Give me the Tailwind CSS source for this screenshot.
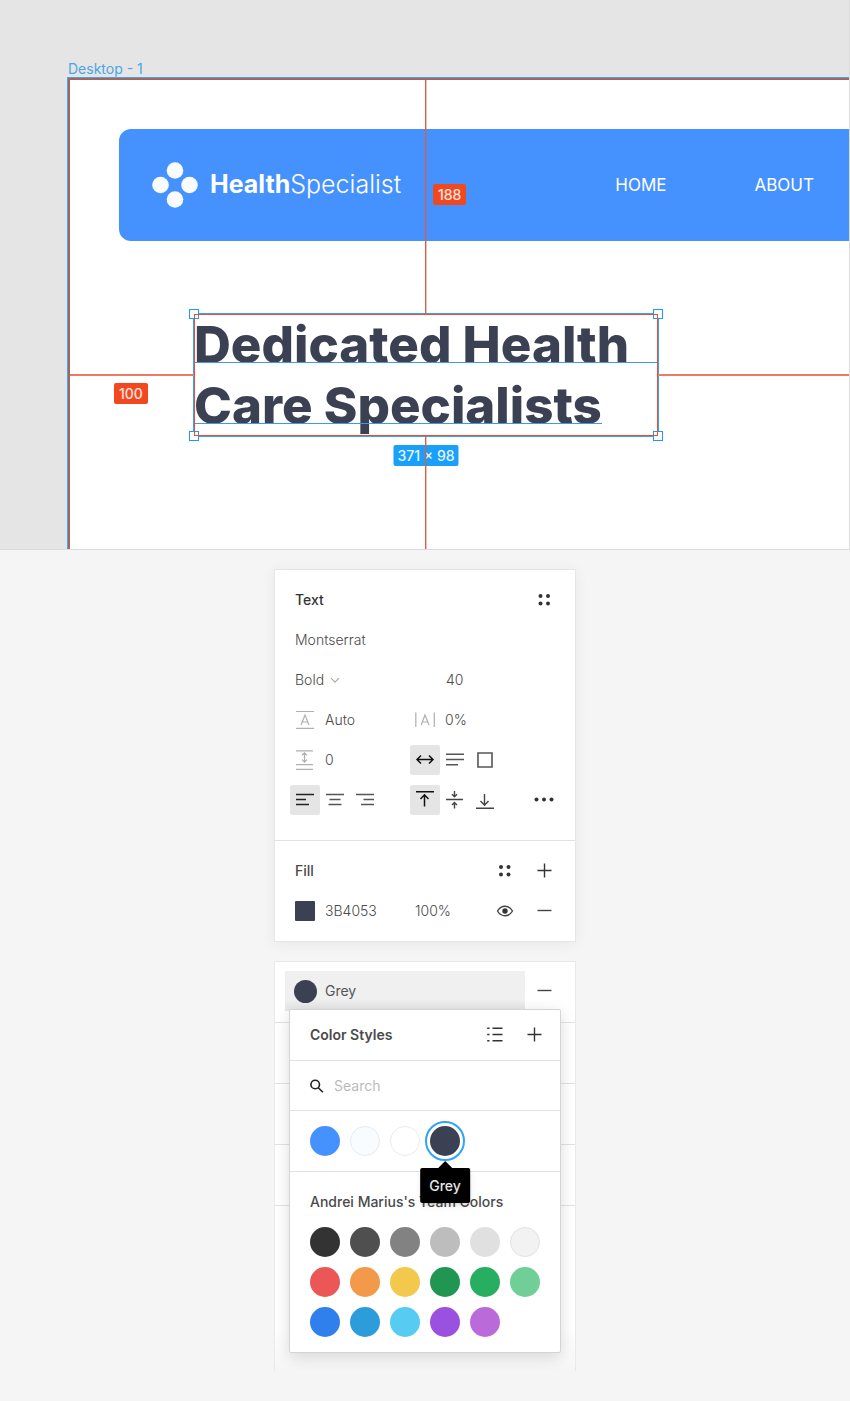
<!DOCTYPE html>
<html lang="en">
<head>
<meta charset="utf-8">
<meta name="viewport" content="width=device-width, initial-scale=1">
<title>Dedicated Health Care Specialists</title>
<script src="https://cdn.jsdelivr.net/npm/@tailwindcss/browser@4"></script>
</head>
<body class="bg-[#f5f5f5] font-['Inter','Liberation_Sans',sans-serif] text-sm text-[#4a4a4a]">

<!-- Canvas -->
<section class="flex flex-col overflow-hidden border-r border-b border-[#dcdcdc] bg-[#e5e5e5] pt-15 pl-[67px]">
  <div class="h-[17px] pl-px text-sm leading-[17px] text-[#4ba6e3]">Desktop - 1</div>
  <div class="border-t border-l border-[#3fa9f0]">
    <div class="relative overflow-hidden border-t-2 border-l-2 border-[#a5645f] bg-white pt-[49px] pb-28">
      <header class="ml-[49px] flex h-28 items-center rounded-l-xl bg-[#4592ff] pr-[35px] pl-[33px] text-white">
        <a href="#" class="flex items-center gap-3 text-[25px]">
          <svg class="size-[46px] shrink-0" viewBox="0 0 46 46" fill="#f8fcff" aria-hidden="true">
            <circle cx="23" cy="8.5" r="8.3"/><circle cx="8.5" cy="23" r="8.3"/><circle cx="37.5" cy="23" r="8.3"/><circle cx="23" cy="37.5" r="8.3"/>
          </svg>
          <span><b class="font-bold">Health</b><span class="font-light">Specialist</span></span>
        </a>
        <nav class="ml-auto flex gap-[88px] text-[17px]">
          <a href="#">HOME</a>
          <a href="#">ABOUT</a>
        </nav>
      </header>

      <div class="relative mt-[72px] ml-[123px] w-[466px] border border-[#3fa0ee]">
        <span class="absolute -top-[5px] -left-[5px] size-[10px] border border-[#1b9bf5] bg-white"></span>
        <span class="absolute -top-[5px] -right-[5px] size-[10px] border border-[#1b9bf5] bg-white"></span>
        <span class="absolute -bottom-[5px] -left-[5px] size-[10px] border border-[#1b9bf5] bg-white"></span>
        <span class="absolute -right-[5px] -bottom-[5px] size-[10px] border border-[#1b9bf5] bg-white"></span>
        <h1 class="relative text-[51px] leading-[61px] font-extrabold whitespace-nowrap text-[#3b4053]">
          <span class="relative block h-[61px]">Dedicated Health<span class="absolute inset-x-0 bottom-[12px] h-px bg-[#3c9be6]"></span></span>
          <span class="relative block h-[61px] w-fit">Care Specialists<span class="absolute inset-x-0 bottom-[12px] h-px bg-[#3c9be6]"></span></span>
        </h1>
        <span class="absolute inset-0 border border-[#e0533a]"></span>
        <!-- Distance guides -->
        <span class="absolute right-full bottom-1/2 -mb-px h-[2px] w-[124px] bg-[#ee7a66]"></span>
        <span class="absolute bottom-1/2 left-full -mb-px h-[2px] w-screen bg-[#ee7a66]"></span>
        <span class="absolute top-[69px] -left-20 rounded-xs bg-[#f2481f] px-[5px] text-sm leading-[21px] font-medium text-white/85">100</span>
        <span class="absolute -top-[130px] left-[239px] rounded-xs bg-[#f2481f] px-[5px] text-sm leading-[21px] font-medium text-white/85">188</span>
        <span class="absolute top-[131px] left-1/2 -translate-x-1/2 rounded-xs bg-[#18a0fb] px-1 text-sm leading-[21px] font-medium whitespace-nowrap text-white/90">371 × 98</span>
        <span class="absolute bottom-full left-1/2 -ml-px h-[235px] w-[2px] border-r border-[#d2604c]/40 bg-[#d2604c] bg-clip-padding"></span>
        <span class="absolute top-full left-1/2 -ml-px h-[113px] w-[2px] border-r border-[#d2604c]/40 bg-[#d2604c] bg-clip-padding"></span>
      </div>
    </div>
  </div>
</section>

<main class="flex flex-col items-center gap-[19px] pt-[19px]">

  <!-- Text and fill properties -->
  <div class="w-[302px] border border-[#e6e6e6] bg-white shadow-[0_2px_14px_rgba(0,0,0,0.06)]">
    <section class="border-b border-[#e2e2e2] px-5 pt-[10px] pb-5">
      <div class="flex h-10 items-center justify-between">
        <h2 class="font-medium text-[#333]">Text</h2>
        <button type="button" aria-label="Text styles" class="flex w-[22px] justify-center">
          <svg class="size-5" viewBox="0 0 20 20" fill="#333"><circle cx="6.5" cy="6" r="2"/><circle cx="14" cy="6" r="2"/><circle cx="6.5" cy="13.5" r="2"/><circle cx="14" cy="13.5" r="2"/></svg>
        </button>
      </div>
      <div class="flex h-10 items-center">
        <input aria-label="Font family" value="Montserrat" class="w-full font-light">
      </div>
      <div class="grid h-10 grid-cols-[151px_1fr] items-center">
        <div class="relative flex items-center">
          <select aria-label="Font weight" class="w-[50px] appearance-none font-light"><option>Bold</option></select>
          <svg class="pointer-events-none absolute left-[35px] size-[10px]" viewBox="0 0 10 10" fill="none" stroke="#aaa" stroke-width="1.2" aria-hidden="true"><path d="M1 3.2 5 7.2 9 3.2"/></svg>
        </div>
        <input aria-label="Font size" value="40" class="w-full font-light">
      </div>
      <div class="grid h-10 grid-cols-[120px_1fr] items-center">
        <label class="flex items-center gap-[10px]">
          <svg class="size-5 shrink-0" viewBox="0 0 20 20" fill="none" stroke="#b0b0b0" stroke-width="1.2" role="img" aria-label="Line height"><path d="M1 1.5h18M1 18.3h18M6 15 10 5l4 10M7.3 12h5.4"/></svg>
          <input value="Auto" class="w-20 font-light">
        </label>
        <label class="flex items-center gap-[10px]">
          <svg class="size-5 shrink-0" viewBox="0 0 20 20" fill="none" stroke="#b0b0b0" stroke-width="1.2" role="img" aria-label="Letter spacing"><path d="M.8 2.5v14.5M19.3 2.5v14.5M6.2 15 10 5l4 10M7.4 12h5.3"/></svg>
          <input value="0%" class="w-20 font-light">
        </label>
      </div>
      <div class="grid h-10 grid-cols-[115px_1fr] items-center">
        <label class="flex items-center gap-[10px]">
          <svg class="size-5 shrink-0" viewBox="0 0 20 20" fill="none" stroke="#b0b0b0" stroke-width="1.2" role="img" aria-label="Paragraph spacing"><path d="M1 .8h17M1 14.6h17M1 19.3h17M9.5 3v9M7 5.3 9.5 2.8 12 5.3M7 9.7l2.5 2.5L12 9.7"/></svg>
          <input value="0" class="w-16 font-light">
        </label>
        <div class="flex">
          <button type="button" aria-label="Auto width" aria-pressed="true" class="flex size-[30px] items-center justify-center rounded-xs bg-[#e5e5e5]">
            <svg class="size-5" viewBox="0 0 20 20" fill="none" stroke="#111" stroke-width="1.5"><path d="M2.3 9.5h15.4M6 5.5 2 9.5l4 4M14 5.5l4 4-4 4"/></svg>
          </button>
          <button type="button" aria-label="Auto height" class="flex size-[30px] items-center justify-center">
            <svg class="size-5" viewBox="0 0 20 20" fill="none" stroke="#555" stroke-width="1.5"><path d="M1 4.3h18M1 9.5h18M1 14.7h12"/></svg>
          </button>
          <button type="button" aria-label="Fixed size" class="flex size-[30px] items-center justify-center">
            <svg class="size-5" viewBox="0 0 20 20" fill="none" stroke="#555"><path stroke-width="1.6" d="M3 3h14v14H3z"/></svg>
          </button>
        </div>
      </div>
      <div class="-ml-[5px] grid h-10 grid-cols-[120px_1fr_auto] items-center">
        <div class="flex">
          <button type="button" aria-label="Align left" aria-pressed="true" class="flex size-[30px] items-center justify-center rounded-xs bg-[#e5e5e5]">
            <svg class="size-5" viewBox="0 0 20 20" fill="none" stroke="#222" stroke-width="1.5"><path d="M1 4.5h18M1 9.5h10M1 14.5h13"/></svg>
          </button>
          <button type="button" aria-label="Align center" class="flex size-[30px] items-center justify-center">
            <svg class="size-5" viewBox="0 0 20 20" fill="none" stroke="#555" stroke-width="1.4"><path d="M1 4.5h18M4.5 9.5h11M3.5 14.5h13"/></svg>
          </button>
          <button type="button" aria-label="Align right" class="flex size-[30px] items-center justify-center">
            <svg class="size-5" viewBox="0 0 20 20" fill="none" stroke="#555" stroke-width="1.4"><path d="M1 4.5h18M8.5 9.5H19M6 14.5h13"/></svg>
          </button>
        </div>
        <div class="flex">
          <button type="button" aria-label="Align top" aria-pressed="true" class="flex size-[30px] items-center justify-center rounded-xs bg-[#e5e5e5]">
            <svg class="size-5" viewBox="0 0 20 20" fill="none" stroke="#111" stroke-width="1.5"><path d="M1 1.7h18M9.5 16.5V4.8M5.5 9l4-4.2 4 4.2"/></svg>
          </button>
          <button type="button" aria-label="Align middle" class="flex size-[30px] items-center justify-center">
            <svg class="size-5" viewBox="0 0 20 20" fill="none" stroke="#444" stroke-width="1.4"><path d="M1 9.5h17M9.5 1v5.5M7 4.2l2.5 2.5L12 4.2M9.5 18.5v-6M7 15l2.5-2.5L12 15"/></svg>
          </button>
          <button type="button" aria-label="Align bottom" class="flex size-[30px] items-center justify-center">
            <svg class="size-5" viewBox="0 0 20 20" fill="none" stroke="#444" stroke-width="1.4"><path d="M1 18.3h18M9.5 4v11M5.5 11l4 4.2 4-4.2"/></svg>
          </button>
        </div>
        <button type="button" aria-label="More options" class="flex w-[22px] justify-center">
          <svg class="h-5 w-[22px]" viewBox="0 0 22 20" fill="#333"><circle cx="3.5" cy="9.5" r="2"/><circle cx="11" cy="9.5" r="2"/><circle cx="18.5" cy="9.5" r="2"/></svg>
        </button>
      </div>
    </section>

    <section class="px-5 py-[10px]">
      <div class="flex h-10 items-center">
        <h2 class="font-medium">Fill</h2>
        <button type="button" aria-label="Fill styles" class="mr-5 ml-auto">
          <svg class="size-5" viewBox="0 0 20 20" fill="#333"><circle cx="6" cy="6" r="2"/><circle cx="13.5" cy="6" r="2"/><circle cx="6" cy="13.5" r="2"/><circle cx="13.5" cy="13.5" r="2"/></svg>
        </button>
        <button type="button" aria-label="Add fill">
          <svg class="size-5" viewBox="0 0 20 20" fill="none" stroke="#333" stroke-width="1.4"><path d="M2.5 9.5h14M9.5 2.5v14"/></svg>
        </button>
      </div>
      <div class="flex h-10 items-center">
        <button type="button" aria-label="Fill color" class="mr-[10px] size-5 rounded-[1px] bg-[#3b4053]"></button>
        <input aria-label="Hex color" value="3B4053" class="w-[90px] font-light">
        <input aria-label="Opacity" value="100%" class="w-15 font-light">
        <button type="button" aria-label="Toggle visibility" class="mr-5 ml-auto">
          <svg class="size-5" viewBox="0 0 20 20"><path d="M2.5 10C4.5 6.6 7 5.2 10 5.2s5.5 1.4 7.5 4.8c-2 3.4-4.500 4.800-7.500 4.800S4.500 13.400 2.500 10z" fill="none" stroke="#444" stroke-width="1.4"/><circle cx="10" cy="10" r="2.7" fill="#333"/></svg>
        </button>
        <button type="button" aria-label="Remove fill">
          <svg class="size-5" viewBox="0 0 20 20" fill="none" stroke="#444" stroke-width="1.4"><path d="M2.5 9.5h14"/></svg>
        </button>
      </div>
    </section>
  </div>

  <!-- Color style picker -->
  <div class="relative w-[302px] border border-b-0 border-[#e9e9e9] bg-linear-to-b from-white from-90% to-[#f5f5f5]">
    <div class="flex h-[61px] items-start border-b border-[#e2e2e2] pt-[9px] pr-5 pl-[10px]">
      <button type="button" class="flex h-10 w-60 items-center gap-2 bg-linear-to-b from-[#f0f0f0] from-70% to-[#e6e6e6] pl-[9px] text-left text-[#555]">
        <span class="size-[23px] rounded-full bg-[#3b4053]"></span>Grey
      </button>
      <button type="button" aria-label="Remove style" class="ml-auto flex h-10 items-center">
        <svg class="size-5" viewBox="0 0 20 20" fill="none" stroke="#444" stroke-width="1.4"><path d="M2.5 9.5h14"/></svg>
      </button>
    </div>
    <div class="h-[61px] border-b border-[#e2e2e2]"></div>
    <div class="h-[61px] border-b border-[#e2e2e2]"></div>
    <div class="h-[61px] border-b border-[#e2e2e2]"></div>
    <div class="h-[165px]"></div>

    <div role="dialog" aria-label="Color Styles" class="absolute inset-x-[14px] top-[47px] rounded-xs border border-[#d4d4d4] bg-white shadow-[0_4px_16px_rgba(0,0,0,0.14)]">
      <div class="flex h-[51px] items-center border-b border-[#e2e2e2] pr-[15px] pl-5">
        <h2 class="font-semibold">Color Styles</h2>
        <button type="button" aria-label="Show as list" class="mr-5 ml-auto">
          <svg class="size-5" viewBox="0 0 20 20" fill="none" stroke="#333" stroke-width="1.5"><path d="M7.5 3.2h10M7.5 9.5h10M7.5 15.8h10M2.2 3.2h2.3M2.2 9.5h2.3M2.2 15.8h2.3"/></svg>
        </button>
        <button type="button" aria-label="Create style">
          <svg class="size-5" viewBox="0 0 20 20" fill="none" stroke="#333" stroke-width="1.4"><path d="M2.5 9.5h14M9.5 2.5v14"/></svg>
        </button>
      </div>
      <label class="flex h-[50px] items-center gap-[10px] border-b border-[#e2e2e2] px-5">
        <svg class="size-[14px] shrink-0" viewBox="0 0 14 14" fill="none" stroke="#222" stroke-width="1.6" role="img" aria-label="Search"><circle cx="5.2" cy="5.5" r="4.3"/><path d="m8.3 8.700 4.500 4.500"/></svg>
        <input type="search" placeholder="Search" class="w-full placeholder:text-[#bbb]">
      </label>
      <div class="flex h-[61px] items-center gap-[10px] border-b border-[#e2e2e2] px-5">
        <button type="button" aria-label="Blue" class="size-[30px] rounded-full bg-[#4592ff]"></button>
        <button type="button" aria-label="Light blue" class="size-[30px] rounded-full border border-[#e3ebf0] bg-[#f8fcff]"></button>
        <button type="button" aria-label="White" class="size-[30px] rounded-full border border-[#ebebeb] bg-white"></button>
        <div class="relative flex">
          <button type="button" aria-describedby="swatch-tip" aria-label="Grey" class="size-[30px] rounded-full bg-[#3b4053] outline-2 outline-offset-[3px] outline-[#2ea5f7]"></button>
          <div id="swatch-tip" role="tooltip" class="absolute top-[42px] left-1/2 -translate-x-1/2 rounded-xs bg-black px-[9px] leading-[35px] font-medium text-[#e6e6e6] shadow-md">
            <svg class="absolute bottom-full left-1/2 h-[7px] w-[14px] -translate-x-1/2" viewBox="0 0 14 7" aria-hidden="true"><path d="M0 7 7 0l7 7z"/></svg>
            Grey
          </div>
        </div>
      </div>
      <h3 class="px-5 pt-5 leading-5 font-medium">Andrei Marius's Team Colors</h3>
      <div class="grid grid-cols-[repeat(6,30px)] gap-[10px] px-5 py-[15px]">
        <button type="button" aria-label="Gray 1" class="size-[30px] rounded-full bg-[#333333]"></button>
        <button type="button" aria-label="Gray 2" class="size-[30px] rounded-full bg-[#4f4f4f]"></button>
        <button type="button" aria-label="Gray 3" class="size-[30px] rounded-full bg-[#828282]"></button>
        <button type="button" aria-label="Gray 4" class="size-[30px] rounded-full bg-[#bdbdbd]"></button>
        <button type="button" aria-label="Gray 5" class="size-[30px] rounded-full bg-[#e0e0e0]"></button>
        <button type="button" aria-label="Gray 6" class="size-[30px] rounded-full border border-[#e2e2e2] bg-[#f2f2f2]"></button>
        <button type="button" aria-label="Red" class="size-[30px] rounded-full bg-[#eb5757]"></button>
        <button type="button" aria-label="Orange" class="size-[30px] rounded-full bg-[#f2994a]"></button>
        <button type="button" aria-label="Yellow" class="size-[30px] rounded-full bg-[#f2c94c]"></button>
        <button type="button" aria-label="Green 1" class="size-[30px] rounded-full bg-[#219653]"></button>
        <button type="button" aria-label="Green 2" class="size-[30px] rounded-full bg-[#27ae60]"></button>
        <button type="button" aria-label="Green 3" class="size-[30px] rounded-full bg-[#6fcf97]"></button>
        <button type="button" aria-label="Blue 1" class="size-[30px] rounded-full bg-[#2f80ed]"></button>
        <button type="button" aria-label="Blue 2" class="size-[30px] rounded-full bg-[#2d9cdb]"></button>
        <button type="button" aria-label="Blue 3" class="size-[30px] rounded-full bg-[#56ccf2]"></button>
        <button type="button" aria-label="Purple 1" class="size-[30px] rounded-full bg-[#9b51e0]"></button>
        <button type="button" aria-label="Purple 2" class="size-[30px] rounded-full bg-[#bb6bd9]"></button>
      </div>
    </div>
  </div>
</main>
</body>
</html>
